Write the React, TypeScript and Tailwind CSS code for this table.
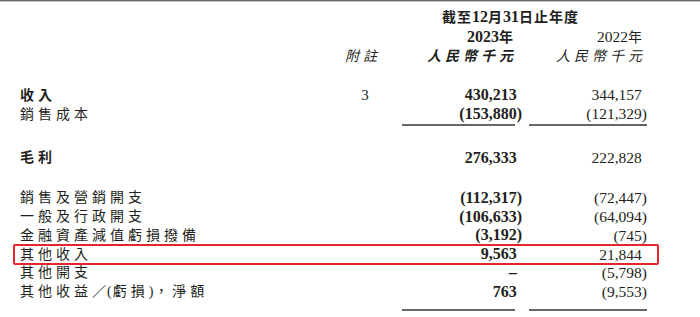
import type { ReactNode } from "react";

const font = "font-['Liberation_Serif','Noto_Sans_CJK_TC',serif]";

type Row = { label: ReactNode; note?: string; a: string; b: string; bold?: boolean; mark?: boolean };

const top: Row[] = [
  { label: "收入", note: "3", a: "430,213", b: "344,157", bold: true },
  { label: "銷售成本", a: "(153,880)", b: "(121,329)" },
];

const body: Row[] = [
  { label: "銷售及營銷開支", a: "(112,317)", b: "(72,447)" },
  { label: "一般及行政開支", a: "(106,633)", b: "(64,094)" },
  { label: "金融資產減值虧損撥備", a: "(3,192)", b: "(745)" },
  { label: "其他收入", a: "9,563", b: "21,844", mark: true },
  { label: "其他開支", a: "–", b: "(5,798)" },
  {
    label: (
      <>
        其他收益<span className="tracking-[1px]">／(</span>虧損<span className="tracking-[1px]">)</span>，淨額
      </>
    ),
    a: "763",
    b: "(9,553)",
  },
];

function Num({ v }: { v: string }) {
  if (v.startsWith("(")) return <>{v}</>;
  return (
    <>
      {v}
      <span className="invisible">)</span>
    </>
  );
}

function Line({ r, h }: { r: Row; h: string }) {
  return (
    <div className={`relative flex items-center ${h}`}>
      {r.mark && (
        <div className="absolute left-[13px] top-[-1px] bottom-[-1px] w-[646px] rounded-[2px] border-2 border-[#e3262b]" />
      )}
      <div className={`w-[340px] pl-[20px] text-[14px] tracking-[4px] ${r.bold ? "font-bold" : ""}`}>{r.label}</div>
      <div className="w-[50px] text-center text-[15px]">{r.note}</div>
      <div className="ml-[10px] w-[122px] text-right text-[16px] font-bold">
        <Num v={r.a} />
      </div>
      <div className="ml-[3px] w-[122px] text-right text-[15.5px]">
        <Num v={r.b} />
      </div>
    </div>
  );
}

function Rule() {
  return (
    <div className="flex">
      <div className="ml-[402px] h-[1.5px] w-[113px] bg-[#666]" />
      <div className="ml-[14px] h-[1.5px] w-[118px] bg-[#666]" />
    </div>
  );
}

export default function App() {
  return (
    <div className={`w-[700px] h-[317px] overflow-hidden bg-white text-[#231f20] ${font}`}>
      <div className="h-[1px] bg-[#666]" />
      <div className="h-[1px] bg-[#c4c4c4]" />

      <div className="pt-[5px]">
        <div className="h-[20px] leading-[20px] pl-[442px] text-[14px] font-bold tracking-[1px]">
          截至<span className="text-[16px] tracking-normal">12</span>月<span className="text-[16px] tracking-normal">31</span>日止年度
        </div>
        <div className="flex h-[20px] leading-[20px]">
          <div className="ml-[400px] w-[113px] text-right text-[14px] font-bold">
            <span className="text-[16px]">2023</span>年
          </div>
          <div className="ml-[16px] w-[113px] text-right text-[14px]">
            <span className="text-[15.5px]">2022</span>年
          </div>
        </div>
        <div className="flex h-[20px] leading-[20px] italic text-[14px] tracking-[4px]">
          <div className="ml-[345px] w-[44px]">附註</div>
          <div className="ml-[11px] w-[117px] text-right font-bold">人民幣千元</div>
          <div className="ml-[12px] w-[117px] text-right">人民幣千元</div>
        </div>
      </div>

      <div className="mt-[18.5px]">
        {top.map((r, i) => (
          <Line key={i} r={r} h="h-[19px]" />
        ))}
      </div>
      <div className="mt-[0.5px]">
        <Rule />
      </div>

      <div className="mt-[22.5px]">
        <Line r={{ label: "毛利", a: "276,333", b: "222,828", bold: true }} h="h-[19px]" />
      </div>

      <div className="mt-[21.5px]">
        {body.map((r, i) => (
          <Line key={i} r={r} h="h-[18.75px]" />
        ))}
      </div>
      <div className="mt-[8px]">
        <Rule />
      </div>
    </div>
  );
}
